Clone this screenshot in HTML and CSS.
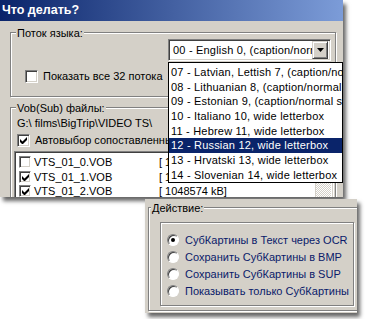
FILE: index.html
```html
<!DOCTYPE html>
<html lang="ru">

<head>
    <meta charset="UTF-8">
    <title>Что делать?</title>
    <link rel="stylesheet" href="styles.css">
</head>

<body>
    <div class="stage">
        <div class="window">
            <div class="titlebar">Что делать?</div>
            <div class="win-body">
                <div class="group group-lang">
                    <span class="group-title">Поток языка:</span>
                    <div class="combo-row">
                        <div class="combo">
                            <span class="combo-text">00 - English 0, (caption/normal size)</span>
                            <span class="combo-btn">
                                <svg width="7" height="4" viewBox="0 0 7 4"><path d="M0 0h7L3.5 4z" fill="#000"/></svg>
                            </span>
                        </div>
                    </div>
                    <div class="check-row check-all">
                        <span class="box"></span>
                        <span>Показать все 32 потока</span>
                    </div>
                </div>
                <div class="group group-vob">
                    <span class="group-title">Vob(Sub) файлы:</span>
                    <div class="path">G:\ films\BigTrip\VIDEO TS\</div>
                    <div class="check-row check-auto">
                        <span class="box checked"></span>
                        <span>Автовыбор сопоставленных файлов</span>
                    </div>
                    <div class="listbox">
                        <div class="vob-row"><span class="box"></span><span class="vob-name">VTS_01_0.VOB</span><span class="vob-size">[ 12288 kB]</span></div>
                        <div class="vob-row"><span class="box checked"></span><span class="vob-name">VTS_01_1.VOB</span><span class="vob-size">[ 1048574 kB]</span></div>
                        <div class="vob-row"><span class="box checked"></span><span class="vob-name">VTS_01_2.VOB</span><span class="vob-size">[ 1048574 kB]</span></div>
                        <div class="scrollbar"></div>
                    </div>
                </div>
            </div>
        </div>

        <div class="dropdown">
            <div class="drop-item">07 - Latvian, Lettish 7, (caption/normal size)</div>
            <div class="drop-item">08 - Lithuanian 8, (caption/normal size)</div>
            <div class="drop-item">09 - Estonian 9, (caption/normal size)</div>
            <div class="drop-item">10 - Italiano 10, wide letterbox</div>
            <div class="drop-item">11 - Hebrew 11, wide letterbox</div>
            <div class="drop-item selected">12 - Russian 12, wide letterbox</div>
            <div class="drop-item">13 - Hrvatski 13, wide letterbox</div>
            <div class="drop-item">14 - Slovenian 14, wide letterbox</div>
        </div>

        <div class="action-panel">
            <div class="group group-action">
                <span class="group-title">Действие:</span>
                <div class="radio-frame">
                    <div class="radio-row"><span class="radio on"></span>СубКартины в Текст через OCR</div>
                    <div class="radio-row"><span class="radio"></span>Сохранить СубКартины в BMP</div>
                    <div class="radio-row"><span class="radio"></span>Сохранить СубКартины в SUP</div>
                    <div class="radio-row"><span class="radio"></span>Показывать только СубКартины</div>
                </div>
            </div>
        </div>
    </div>
</body>

</html>
```

FILE: styles.css
```css
* {
    box-sizing: border-box;
}

html,
body {
    margin: 0;
    padding: 0;
    background: #fff;
    font-family: 'Liberation Sans', Arial, sans-serif;
    font-size: 11px;
    line-height: 14px;
    color: #000;
}

.stage {
    position: relative;
    width: 365px;
    height: 319px;
    overflow: hidden;
}

/* main dialog */

.window {
    width: 343px;
    height: 197px;
    background: #d4d0c8;
    overflow: hidden;
    box-shadow: 3px 4px 4px rgba(0, 0, 0, 0.6);
}

.titlebar {
    height: 21px;
    line-height: 20px;
    padding-left: 2px;
    color: #fff;
    font-weight: bold;
    font-size: 12.5px;
    background: linear-gradient(to right, #0a246a, #7c9cd8);
}

.win-body {
    padding: 11px 0 0 10px;
}

.group {
    border: 1px solid #808080;
    box-shadow: inset 1px 1px 0 #fff, 1px 1px 0 #fff;
}

.group-title {
    display: block;
    width: max-content;
    height: 14px;
    margin: -7px 0 0 5px;
    padding: 0 1px;
    background: #d4d0c8;
}

.group-lang {
    width: 326px;
    height: 65px;
}

.combo-row {
    display: flex;
    justify-content: flex-end;
    margin-top: -1px;
    padding-right: 4px;
}

.combo {
    display: flex;
    align-items: center;
    width: 163px;
    height: 22px;
    background: #fff;
    border: 1px solid;
    border-color: #808080 #fff #fff #808080;
    box-shadow: inset 1px 1px 0 #404040, inset -1px -1px 0 #d4d0c8;
    padding: 2px;
}

.combo-text {
    flex: 1;
    overflow: hidden;
    white-space: nowrap;
    padding-left: 2px;
    letter-spacing: 0.2px;
}

.combo-btn {
    display: flex;
    align-items: center;
    justify-content: center;
    width: 16px;
    height: 18px;
    background: #d4d0c8;
    border: 1px solid;
    border-color: #d4d0c8 #404040 #404040 #d4d0c8;
    box-shadow: inset 1px 1px 0 #fff, inset -1px -1px 0 #808080;
}

.check-row {
    display: flex;
    align-items: center;
    gap: 5px;
    white-space: nowrap;
}

.check-all {
    margin: 8px 0 0 14px;
}

.box {
    flex: none;
    width: 13px;
    height: 13px;
    background: #fff;
    border: 1px solid;
    border-color: #808080 #fff #fff #808080;
    box-shadow: inset 1px 1px 0 #404040, inset -1px -1px 0 #d4d0c8;
}

.box.checked {
    background: #fff url("data:image/svg+xml,%3Csvg xmlns='http://www.w3.org/2000/svg' width='7' height='7'%3E%3Cpath d='M0 2v3l2 2h1l4-4V0L2.5 4.5z' fill='%23000'/%3E%3C/svg%3E") no-repeat 2px 2px;
}

.group-vob {
    width: 326px;
    height: 120px;
    margin-top: 10px;
}

.path {
    margin: 1px 0 0 6px;
    white-space: nowrap;
}

.check-auto {
    margin: 3px 0 0 6px;
}

.listbox {
    position: relative;
    margin: 4px 0 0 3px;
    width: 320px;
    height: 70px;
    background: #fff;
    border: 1px solid;
    border-color: #808080 #fff #fff #808080;
    box-shadow: inset 1px 1px 0 #404040, inset -1px -1px 0 #d4d0c8;
    padding: 3px 0 0 2px;
}

.vob-row {
    display: flex;
    align-items: center;
    height: 14.5px;
    white-space: nowrap;
}

.vob-row .box {
    margin-left: 2px;
    width: 12px;
    height: 12px;
}

.vob-name {
    width: 128px;
    padding-left: 3px;
}

.scrollbar {
    position: absolute;
    top: 2px;
    right: 2px;
    bottom: 2px;
    width: 16px;
    background: repeating-conic-gradient(#d4d0c8 0 25%, #fff 0 50%) 0 0 / 2px 2px;
    border-left: 1px solid #d4d0c8;
}

/* open combo list */

.dropdown {
    position: absolute;
    left: 168px;
    top: 62px;
    width: 175px;
    height: 121px;
    background: #fff;
    border: 1px solid #000;
    padding-top: 2px;
    overflow: hidden;
}

.drop-item {
    height: 14.7px;
    line-height: 14.7px;
    padding-left: 2px;
    letter-spacing: 0.2px;
    white-space: nowrap;
}

.drop-item.selected {
    background: #0a246a;
    color: #fff;
}

/* action panel */

.action-panel {
    position: absolute;
    left: 145px;
    top: 199px;
    width: 212px;
    height: 114px;
    background: #d4d0c8;
    padding: 8px 0 0 3px;
    box-shadow: 3px 4px 4px rgba(0, 0, 0, 0.6);
    overflow: hidden;
}

.group-action {
    width: 215px;
    height: 104px;
}

.group-action .group-title {
    margin-left: 2px;
}

.radio-frame {
    margin: 7px 0 0 11px;
    width: 194px;
    height: 84px;
    border: 1px solid #808080;
    box-shadow: inset 1px 1px 0 #fff, 1px 1px 0 #fff;
    padding: 8px 0 0 6px;
}

.radio-row {
    display: flex;
    align-items: center;
    gap: 6px;
    height: 17px;
    color: #0a1a6a;
    white-space: nowrap;
}

.radio {
    flex: none;
    position: relative;
    width: 12px;
    height: 12px;
    border-radius: 50%;
    background: #fff;
    border: 1px solid;
    border-color: #808080 #fff #fff #808080;
    box-shadow: inset 1px 1px 0 #404040;
}

.radio.on::after {
    content: "";
    position: absolute;
    left: 3px;
    top: 3px;
    width: 4px;
    height: 4px;
    border-radius: 50%;
    background: #000;
}
```
